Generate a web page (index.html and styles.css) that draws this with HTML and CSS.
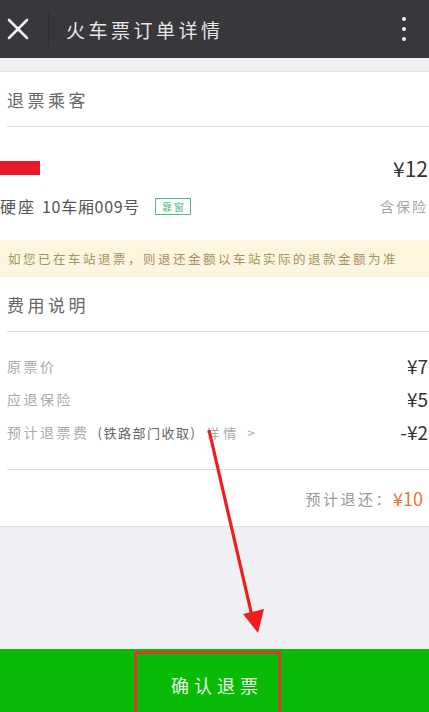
FILE: index.html
```html
<!DOCTYPE html>
<html lang="zh-CN">
<head>
<meta charset="utf-8">
<link rel="stylesheet" href="styles.css">
</head>
<body>
<div class="page">
  <header class="topbar">
    <div class="close">
      <svg width="22" height="22" viewBox="0 0 22 22"><path d="M2 2 L20 20 M20 2 L2 20" stroke="#f2f2f2" stroke-width="2.6" stroke-linecap="round"/></svg>
    </div>
    <div class="divider"></div>
    <div class="title">火车票订单详情</div>
    <div class="more"><i></i><i></i><i></i></div>
  </header>
  <div class="gap-strip"></div>
  <section class="card">
    <div class="section-head">退票乘客</div>
    <div class="passenger">
      <div class="row">
        <span class="name-mask"></span>
        <span class="price">¥12</span>
      </div>
      <div class="row info">
        <span class="seat">硬座<span class="car">10车厢009号</span><span class="tag">靠窗</span></span>
        <span class="insure">含保险</span>
      </div>
    </div>
    <div class="notice">如您已在车站退票，则退还金额以车站实际的退款金额为准</div>
    <div class="section-head">费用说明</div>
    <div class="fees">
      <div class="fee"><span class="label">原票价</span><span class="val">¥7</span></div>
      <div class="fee"><span class="label">应退保险</span><span class="val">¥5</span></div>
      <div class="fee"><span class="label">预计退票费<span class="sub">(铁路部门收取)</span><span class="detail">详情 &gt;</span></span><span class="val">-¥2</span></div>
    </div>
    <div class="total"><span class="tlabel">预计退还：</span><span class="tval">¥10</span></div>
  </section>
  <div class="filler"></div>
  <footer class="action">
    <span class="btn-text">确认退票</span>
    <div class="mark-box"></div>
  </footer>
  <svg class="arrow" width="429" height="712" viewBox="0 0 429 712">
    <path d="M209 430 L252 616" stroke="#f21c1c" stroke-width="3.2" fill="none"/>
    <path d="M243 614 L264 609 L258 633 Z" fill="#f21c1c"/>
  </svg>
</div>
</body>
</html>
```
FILE: styles.css
```css
* { box-sizing: border-box; margin: 0; padding: 0; }
body {
  margin: 0;
  font-family: "Noto Sans CJK SC", "Noto Sans", "Liberation Sans", sans-serif;
  background: #efeff4;
}
.page {
  position: relative;
  width: 429px;
  height: 712px;
  display: flex;
  flex-direction: column;
  overflow: hidden;
  background: #efeff4;
}
.topbar {
  height: 58px;
  background: #38373c;
  display: flex;
  align-items: center;
  flex-shrink: 0;
}
.close {
  width: 38px;
  padding-left: 7px;
  display: flex;
  align-items: center;
}
.divider {
  width: 1px;
  height: 34px;
  background: #2e2d32;
  margin-left: 10px;
}
.title {
  margin-left: 17px;
  color: #e6e6e6;
  font-size: 19px;
  letter-spacing: 3.5px;
  flex: 1;
}
.more {
  width: 22px;
  margin-right: 14px;
  display: flex;
  flex-direction: column;
  align-items: center;
  gap: 6px;
}
.more i {
  width: 4px;
  height: 4px;
  border-radius: 50%;
  background: #f2f2f2;
}
.gap-strip {
  height: 14px;
  background: #efeff4;
  border-bottom: 1px solid #e2e2e6;
  flex-shrink: 0;
}
.card {
  background: #fff;
  flex-shrink: 0;
}
.section-head {
  height: 55px;
  margin-left: 7px;
  display: flex;
  align-items: center;
  border-bottom: 1px solid #dcdcdc;
  font-size: 17px;
  color: #666;
  letter-spacing: 3.5px;
}
.passenger {
  padding: 30px 1px 23px 0;
  display: flex;
  flex-direction: column;
  gap: 16px;
}
.row {
  display: flex;
  align-items: center;
  justify-content: space-between;
  height: 22px;
}
.name-mask {
  width: 40px;
  height: 14px;
  background: #e8192b;
}
.price {
  font-size: 21px;
  color: #333;
}
.seat {
  font-size: 16px;
  color: #555;
  display: flex;
  align-items: center;
  white-space: pre;
  letter-spacing: 2px;
}
.car {
  margin-left: 6px;
  letter-spacing: 0.7px;
}
.tag {
  margin-left: 15px;
  border: 1px solid #4fbb7a;
  color: #4fbb7a;
  font-size: 10px;
  letter-spacing: 2px;
  padding: 0 4px 0 6px;
  line-height: 15px;
}
.insure {
  font-size: 14px;
  color: #a5a5a5;
  letter-spacing: 2px;
}
.notice {
  height: 37px;
  background: #fdf5df;
  color: #a8915e;
  font-size: 12.5px;
  letter-spacing: 2.5px;
  display: flex;
  align-items: center;
  padding-left: 8px;
  white-space: nowrap;
}
.fees {
  margin-left: 7px;
  padding: 22px 1px 26px 0;
  display: flex;
  flex-direction: column;
  gap: 10px;
  border-bottom: 1px solid #dcdcdc;
}
.fee {
  display: flex;
  justify-content: space-between;
  align-items: center;
  height: 23px;
}
.label {
  font-size: 14px;
  color: #aaa;
  letter-spacing: 2.5px;
  white-space: nowrap;
}
.sub {
  margin-left: 8px;
  font-size: 13px;
  color: #666;
  letter-spacing: 1.5px;
}
.detail {
  margin-left: 10px;
  font-size: 13px;
  color: #aaa;
  letter-spacing: 4px;
}
.val {
  font-size: 19px;
  color: #333;
}
.total {
  height: 56px;
  display: flex;
  justify-content: flex-end;
  align-items: center;
  padding-right: 6px;
}
.tlabel {
  font-size: 15px;
  color: #999;
  letter-spacing: 2.5px;
}
.tval {
  font-size: 18px;
  color: #e8733a;
}
.filler {
  flex: 1;
  border-top: 1px solid #e2e2e6;
}
.action {
  position: relative;
  height: 63px;
  background: #09bb07;
  display: flex;
  align-items: center;
  justify-content: center;
  flex-shrink: 0;
}
.btn-text {
  color: #e6f6e2;
  font-size: 18px;
  letter-spacing: 5px;
  margin-top: 8px;
  margin-left: 5px;
}
.mark-box {
  position: absolute;
  left: 134px;
  top: 2px;
  width: 147px;
  height: 64px;
  border: 3px solid #d83a2c;
}
.arrow {
  position: absolute;
  left: 0;
  top: 0;
  pointer-events: none;
}
```
